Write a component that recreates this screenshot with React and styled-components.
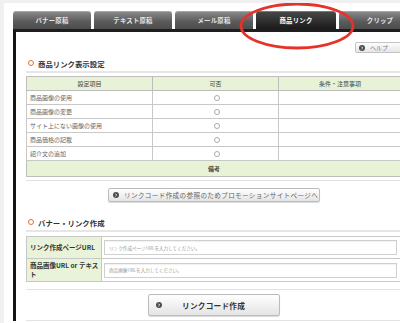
import React from "react";
import styled, { createGlobalStyle } from "styled-components";

const GlobalStyle = createGlobalStyle`
  html, body {
    margin: 0;
    padding: 0;
    overflow: hidden;
    background: #f0f0f0;
    font-family: "Noto Sans CJK JP", "Noto Sans", sans-serif;
  }
`;

const Page = styled.div`
  position: relative;
  margin: 3px 0 0 4px;
  padding: 8px 0 0 9px;
  background: #fff;
  width: 387px;
  height: 312px;
  overflow: hidden;
`;

const Tabs = styled.div`
  display: flex;
  gap: 3px;
  height: 18px;
`;

const Tab = styled.div`
  flex: 0 0 ${(p) => p.w}px;
  display: flex;
  align-items: center;
  justify-content: center;
  border-radius: 3px 3px 0 0;
  font-size: 6.4px;
  font-weight: 700;
  letter-spacing: 0.2px;
  color: ${(p) => (p.active ? "#fff" : "#e4e4e4")};
  background: ${(p) =>
    p.active
      ? "linear-gradient(#4a4a4a, #1a1a1a)"
      : "linear-gradient(#8c8c8c, #5a5a5a 60%, #4c4c4c)"};
  box-shadow: inset 0 1px 0 rgba(255, 255, 255, 0.25);
`;

const Panel = styled.div`
  border-top: 3px solid #1e1e1e;
  border-left: 3px solid #141414;
  padding: 10px 0 0 10px;
  width: 376px;
`;

const HelpRow = styled.div`
  display: flex;
  justify-content: flex-end;
`;

const HelpButton = styled.div`
  width: 47px;
  height: 11px;
  box-sizing: border-box;
  display: flex;
  align-items: center;
  gap: 5px;
  padding-left: 3px;
  border: 1px solid #c4c4c4;
  border-radius: 2px;
  background: linear-gradient(#fdfdfd, #e6e6e6);
  font-size: 6px;
  color: #777;
`;

const Heading = styled.div`
  display: flex;
  align-items: center;
  gap: 4px;
  height: 12px;
  margin-top: ${(p) => p.mt}px;
  padding: 0 0 2px 2px;
  border-bottom: 2px solid #e6e6e6;
  font-size: 7.4px;
  font-weight: 700;
  color: #333;
`;

const Ring = styled.span`
  width: 4px;
  height: 4px;
  border-radius: 50%;
  border: 1.5px solid #f26b2c;
`;

const Table = styled.table`
  width: 100%;
  margin-top: 3px;
  border-collapse: collapse;
  border: 1px solid #c2c2c2;
  font-size: 6px;
  color: #666;
`;

const Th = styled.th`
  height: ${(p) => p.h || 13}px;
  padding: 0;
  background: #e7f2d6;
  border: 1px solid #bdbdbd;
  font-weight: ${(p) => (p.bold ? 700 : 400)};
  color: #444;
  text-align: center;
  width: ${(p) => p.w || "auto"};
`;

const Td = styled.td`
  height: 13px;
  padding: 0 0 0 3px;
  border: 1px solid #c8c8c8;
  text-align: ${(p) => (p.center ? "center" : "left")};
`;

const Radio = styled.span`
  display: inline-block;
  width: 4px;
  height: 4px;
  border-radius: 50%;
  border: 1px solid #aaa;
  vertical-align: middle;
`;

const Divider = styled.div`
  margin-top: ${(p) => p.mt}px;
  border-top: 1px solid #e2e2e2;
`;

const Center = styled.div`
  display: flex;
  justify-content: center;
  margin-top: ${(p) => p.mt}px;
`;

const LinkButton = styled.div`
  width: ${(p) => p.w}px;
  height: ${(p) => p.h}px;
  box-sizing: border-box;
  display: flex;
  align-items: center;
  padding-left: ${(p) => (p.big ? 7 : 4)}px;
  gap: ${(p) => (p.big ? 20 : 5)}px;
  border: 1px solid #bcbcbc;
  border-radius: 2px;
  background: linear-gradient(#ffffff, #e4e4e4);
  box-shadow: 0 1px 1px rgba(0, 0, 0, 0.15);
  font-size: ${(p) => (p.big ? 7.7 : 6.6)}px;
  font-weight: ${(p) => (p.big ? 700 : 400)};
  letter-spacing: ${(p) => (p.big ? 0.2 : 0.35)}px;
  color: ${(p) => (p.big ? "#333" : "#666")};
`;

const FormTable = styled.table`
  width: 100%;
  margin-top: 4px;
  border-collapse: collapse;
  border: 1px solid #c8c8c8;
`;

const Label = styled.th`
  width: 75px;
  box-sizing: border-box;
  height: ${(p) => p.h}px;
  padding: 1px 1px 1px 3px;
  background: #e8f3d9;
  border: 1px solid #c8c8c8;
  font-size: 6.5px;
  font-weight: 700;
  color: #333;
  text-align: left;
  line-height: 1.45;
`;

const InputCell = styled.td`
  padding: 0 4px 0 2px;
  border: 1px solid #c8c8c8;
`;

const Input = styled.div`
  height: 15px;
  box-sizing: border-box;
  display: flex;
  align-items: center;
  padding-left: 4px;
  border: 1px solid #d0d0d0;
  box-shadow: inset 0 1px 1px rgba(0, 0, 0, 0.06);
  font-size: 4.6px;
  color: #999;
`;

const Annotation = styled.svg`
  position: absolute;
  left: 234px;
  top: -3px;
`;

const ArrowIcon = ({ size = 6 }) => (
  <svg width={size} height={size} viewBox="0 0 10 10">
    <circle cx="5" cy="5" r="5" fill="#4d4d4d" />
    <path d="M4 2.8 L6.2 5 L4 7.2" stroke="#fff" strokeWidth="1.5" fill="none" />
  </svg>
);

const rows = [
  "商品画像の使用",
  "商品画像の変更",
  "サイト上にない画像の使用",
  "商品価格の記載",
  "紹介文の追加",
];

const tabs = [
  { label: "バナー原稿", w: 78 },
  { label: "テキスト原稿", w: 78 },
  { label: "メール原稿", w: 78 },
  { label: "商品リンク", w: 80, active: true },
  { label: "クリップ", w: 82 },
];

export default function App() {
  return (
    <>
      <GlobalStyle />
      <Page>
        <Tabs>
          {tabs.map((t) => (
            <Tab key={t.label} w={t.w} active={t.active}>
              {t.label}
            </Tab>
          ))}
        </Tabs>
        <Panel>
          <HelpRow>
            <HelpButton>
              <ArrowIcon />
              ヘルプ
            </HelpButton>
          </HelpRow>

          <Heading mt={4}>
            <Ring />
            商品リンク表示設定
          </Heading>
          <Table>
            <thead>
              <tr>
                <Th w="125px">設定項目</Th>
                <Th w="125px">可否</Th>
                <Th>条件・注意事項</Th>
              </tr>
            </thead>
            <tbody>
              {rows.map((r) => (
                <tr key={r}>
                  <Td>{r}</Td>
                  <Td center>
                    <Radio />
                  </Td>
                  <Td />
                </tr>
              ))}
              <tr>
                <Th colSpan={3} bold h={15}>
                  備考
                </Th>
              </tr>
            </tbody>
          </Table>
          <Divider mt={3} />

          <Center mt={7}>
            <LinkButton w={212} h={14}>
              <ArrowIcon />
              リンクコード作成の参照のためプロモーションサイトページへ
            </LinkButton>
          </Center>

          <Heading mt={14}>
            <Ring />
            バナー・リンク作成
          </Heading>
          <FormTable>
            <tbody>
              <tr>
                <Label h={22}>リンク作成ページURL</Label>
                <InputCell>
                  <Input>リンク作成ページURLを入力してください。</Input>
                </InputCell>
              </tr>
              <tr>
                <Label h={23}>商品画像URL or テキスト</Label>
                <InputCell>
                  <Input>商品画像URLを入力してください。</Input>
                </InputCell>
              </tr>
            </tbody>
          </FormTable>
          <Divider mt={7} />

          <Center mt={4}>
            <LinkButton w={132} h={22} big>
              <ArrowIcon size={6} />
              リンクコード作成
            </LinkButton>
          </Center>
          <Divider mt={4} />
        </Panel>

        <Annotation width="122" height="52" viewBox="0 0 122 52">
          <ellipse
            cx="59"
            cy="26"
            rx="56"
            ry="22"
            fill="none"
            stroke="#e63228"
            strokeWidth="2.8"
          />
        </Annotation>
      </Page>
    </>
  );
}
